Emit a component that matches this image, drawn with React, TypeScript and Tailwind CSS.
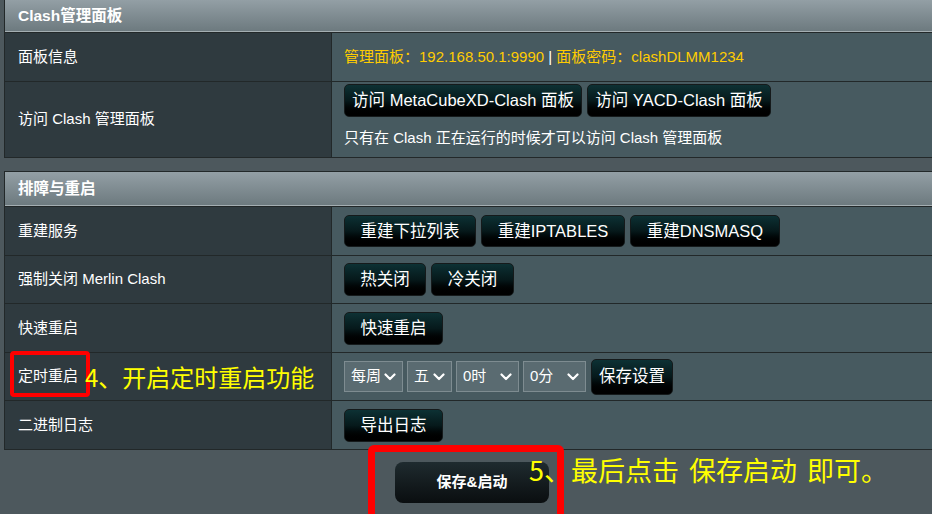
import React from "react";

const FONT = '"Liberation Sans", Arial, "Noto Sans CJK SC", sans-serif';

function Btn({ children, w, h = 33 }: { children: React.ReactNode; w: number; h?: number }) {
  return (
    <div
      className="flex items-center justify-center rounded-[5px] border border-[#151a1b] bg-gradient-to-b from-[#0d3134] via-[#06191b] to-[#000000] text-[16.5px] text-white whitespace-nowrap"
      style={{ width: w, height: h }}
    >
      {children}
    </div>
  );
}

function Sel({ label, w }: { label: string; w: number }) {
  return (
    <div
      className="flex h-[31px] items-center justify-between border border-[#7e8c91] bg-[#5a6b71] pl-[6px] pr-[6px] text-[15px] text-white"
      style={{ width: w }}
    >
      <span>{label}</span>
      <svg width="12" height="8" viewBox="0 0 12 8" fill="none">
        <path d="M1.5 1.5 L6 6 L10.5 1.5" stroke="white" strokeWidth="2.2" strokeLinecap="round" strokeLinejoin="round" />
      </svg>
    </div>
  );
}

function Header({ title, h }: { title: string; h: number }) {
  return (
    <div
      className="flex items-center border-b border-[#222829] bg-gradient-to-b from-[#939fa5] to-[#6c797e] pl-[13px] text-[15.5px] font-bold text-white shadow-[inset_0_-1px_0_#a4aeb2]"
      style={{ height: h + 1 }}
    >
      {title}
    </div>
  );
}

function Row({ label, h, children }: { label: React.ReactNode; h: number; children: React.ReactNode }) {
  return (
    <div className="grid grid-cols-[327px_1fr] border-b border-[#222829]" style={{ height: h + 1 }}>
      <div className="flex items-center border-r border-[#222829] bg-[#2f3a3f] pl-[13px] text-[15px] text-white">
        {label}
      </div>
      <div className="flex items-center bg-[#475a60] pl-[12px]">{children}</div>
    </div>
  );
}

export default function App() {
  return (
    <div
      className="relative h-[514px] w-[932px] overflow-hidden bg-[#4d585d]"
      style={{ fontFamily: FONT }}
    >
      {/* Table 1 */}
      <div className="ml-[4px] w-[940px] border-l border-[#222829]">
        <Header title="Clash管理面板" h={32} />
        <Row label="面板信息" h={48}>
          <div className="text-[15px] text-[#ffcc00]">
            管理面板：192.168.50.1:9990 <span className="text-white">|</span> 面板密码：clashDLMM1234
          </div>
        </Row>
        <Row label="访问 Clash 管理面板" h={75}>
          <div className="flex h-full flex-col pt-[2px]">
            <div className="flex gap-[5px]">
              <Btn w={238}>访问 MetaCubeXD-Clash 面板</Btn>
              <Btn w={184}>访问 YACD-Clash 面板</Btn>
            </div>
            <div className="mt-[10px] text-[15px] text-white">只有在 Clash 正在运行的时候才可以访问 Clash 管理面板</div>
          </div>
        </Row>
      </div>

      {/* Table 2 */}
      <div className="ml-[4px] mt-[13px] w-[940px] border-l border-t border-[#222829]">
        <Header title="排障与重启" h={34} />
        <Row label="重建服务" h={48}>
          <div className="flex gap-[5px]">
            <Btn w={132} h={32}>重建下拉列表</Btn>
            <Btn w={144} h={32}>重建IPTABLES</Btn>
            <Btn w={150} h={32}>重建DNSMASQ</Btn>
          </div>
        </Row>
        <Row label="强制关闭 Merlin Clash" h={47}>
          <div className="flex gap-[5px]">
            <Btn w={82}>热关闭</Btn>
            <Btn w={83}>冷关闭</Btn>
          </div>
        </Row>
        <Row label="快速重启" h={48}>
          <Btn w={99}>快速重启</Btn>
        </Row>
        <Row label="定时重启" h={47}>
          <div className="flex items-center gap-[4px]">
            <Sel label="每周" w={59} />
            <Sel label="五" w={45} />
            <Sel label="0时" w={63} />
            <Sel label="0分" w={63} />
            <div className="ml-[1px]">
              <Btn w={82} h={36}>保存设置</Btn>
            </div>
          </div>
        </Row>
        <Row label="二进制日志" h={48}>
          <Btn w={99}>导出日志</Btn>
        </Row>
      </div>

      {/* Save button */}
      <div className="mt-[12px] flex w-[944px] justify-center">
        <div className="flex h-[41px] w-[154px] items-center justify-center rounded-[8px] bg-gradient-to-b from-[#1f2b2f] to-[#0a0e10] text-[15px] font-bold text-white">
          保存&amp;启动
        </div>
      </div>

      {/* Annotations */}
      <div className="absolute left-[10px] top-[351px] h-[46px] w-[80px] rounded-[4px] border-[4px] border-[#ff0000]" />
      <div
        className="absolute left-[85px] top-[361px] whitespace-nowrap text-[24px] leading-[32px] text-[#ffff00]"
        style={{ fontFamily: '"Noto Sans CJK SC", sans-serif' }}
      >
        4、开启定时重启功能
      </div>
      <div className="absolute left-[368px] top-[445px] h-[80px] w-[196px] rounded-[6px] border-[7px] border-[#ff0000]" />
      <div
        className="absolute left-[529px] top-[451px] whitespace-nowrap text-[27px] leading-[38px] text-[#ffff00] [word-spacing:4px]"
        style={{ fontFamily: '"Noto Sans CJK SC", sans-serif' }}
      >
        5、最后点击 保存启动 即可。
      </div>
    </div>
  );
}
